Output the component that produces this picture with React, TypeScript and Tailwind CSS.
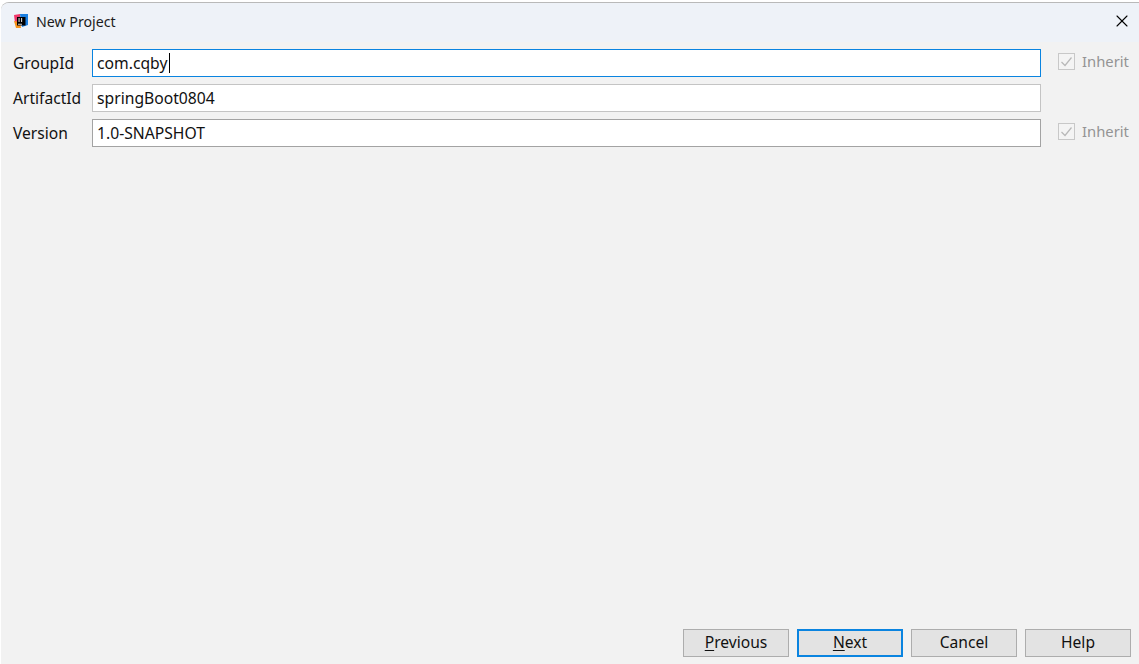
import React from 'react';
import { X } from 'lucide-react';

const font = "font-['Noto_Sans',_'Open_Sans',sans-serif]";

const InheritCheck = () => (
  <div className="flex items-center ml-[17px] gap-[7px] text-[14.8px] text-[#949494] -mt-[4px]">
    <div className="w-[17px] h-[17px] border border-[#c8c8c8] bg-[#f4f4f4] flex items-center justify-center">
      <svg width="13" height="13" viewBox="0 0 13 13" fill="none" stroke="#b8b8b8" strokeWidth="1.2">
        <path d="M1.5 7 L5 10.5 L11.5 2.5" />
      </svg>
    </div>
    <span>Inherit</span>
  </div>
);

interface FieldRowProps {
  label: string;
  value: string;
  focused?: boolean;
  inherit?: boolean;
  borderClass: string;
}

const FieldRow: React.FC<FieldRowProps> = ({ label, value, focused, inherit, borderClass }) => (
  <div className="flex items-center h-7">
    <div className="w-[92px] pl-[13px] pt-[2px] text-[15.6px] text-[#111111]">{label}</div>
    <div className={`w-[949px] h-7 bg-white border pl-1 flex items-center text-[15.7px] text-[#111111] ${borderClass}`}>
      <span className="pt-[2px]">{value}</span>
      {focused && <span className="w-px h-[20px] ml-[2px] bg-black" />}
    </div>
    {inherit && <InheritCheck />}
  </div>
);

const DialogButton: React.FC<{ label: string; mnemonic?: boolean; primary?: boolean }> = ({ label, mnemonic, primary }) => (
  <button
    className={`w-[106px] h-7 bg-[#e3e3e3] flex items-center justify-center text-[15.6px] text-[#111111] ${
      primary ? 'border-2 border-[#0a84e0]' : 'border border-[#adadad]'
    }`}
  >
    {mnemonic ? (
      <>
        <span className="underline underline-offset-2">{label[0]}</span>
        {label.slice(1)}
      </>
    ) : (
      label
    )}
  </button>
);

export default function App() {
  return (
    <div className={`w-[1139px] h-[664px] overflow-hidden bg-white ${font}`}>
      <div className="h-[662px] flex flex-col bg-[#f2f2f2] mt-[2px] ml-px border-t border-[#b9b9b9] rounded-tl-lg">
        <div className="h-[39px] bg-[#eef2f8] flex items-center justify-between pl-[12px] pr-[7px] shrink-0 rounded-tl-lg">
          <div className="flex items-center gap-[7px] -mt-[2px]">
            <svg width="16" height="16" viewBox="0 0 16 16">
              <path d="M1 2 L7 1 L8 9 L2 10 Z" fill="#f0386b" />
              <path d="M7 1 L15 1 L15 12 L9 14 Z" fill="#1b7fe0" />
              <path d="M1 8 L7 9 L8 15 L3 15 Z" fill="#f7941d" />
              <rect x="4" y="4" width="8.5" height="8.5" fill="#000" />
              <rect x="5" y="10.8" width="4" height="0.8" fill="#fff" />
              <rect x="5.6" y="5" width="0.9" height="4" fill="#fff" />
              <rect x="8.2" y="5" width="0.9" height="4" fill="#fff" />
            </svg>
            <span className="text-[14.2px] text-[#1c1c1c]">New Project</span>
          </div>
          <X size={20} strokeWidth={1.3} className="text-black -mt-[3px]" />
        </div>
        <div className="flex flex-col flex-1 -ml-px pt-[7px]">
          <div className="flex flex-col gap-[7px]">
            <FieldRow label="GroupId" value="com.cqby" focused inherit borderClass="border-[#0a84e0]" />
            <FieldRow label="ArtifactId" value="springBoot0804" borderClass="border-[#c4c4c4]" />
            <FieldRow label="Version" value="1.0-SNAPSHOT" inherit borderClass="border-[#a3a3a3]" />
          </div>
          <div className="mt-auto mb-[7px] flex justify-end gap-2 pr-2">
            <DialogButton label="Previous" mnemonic />
            <DialogButton label="Next" mnemonic primary />
            <DialogButton label="Cancel" />
            <DialogButton label="Help" />
          </div>
        </div>
      </div>
    </div>
  );
}
